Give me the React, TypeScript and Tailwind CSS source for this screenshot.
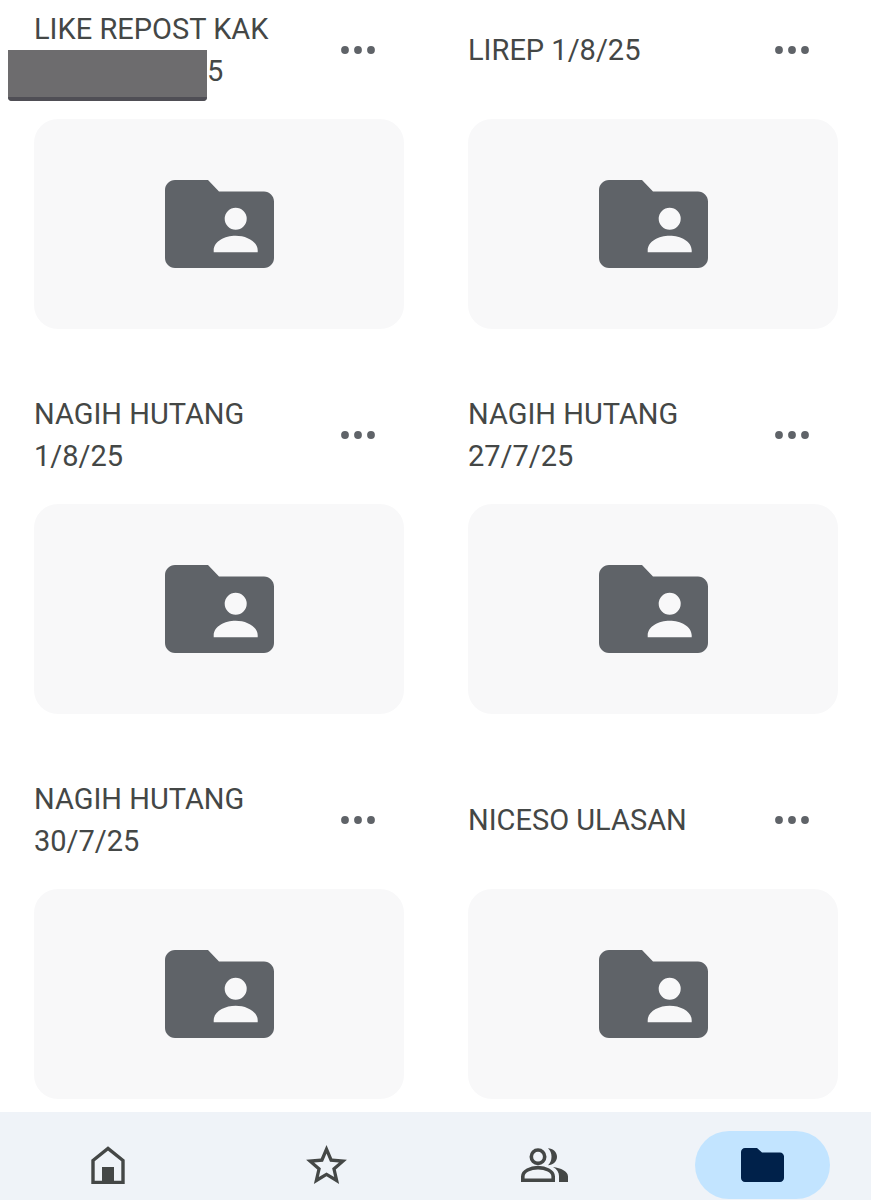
const folders = [
  { lines: ['LIKE REPOST KAK'], redacted: true },
  { lines: ['LIREP 1/8/25'] },
  { lines: ['NAGIH HUTANG 1/8/25'] },
  { lines: ['NAGIH HUTANG 27/7/25'] },
  { lines: ['NAGIH HUTANG 30/7/25'] },
  { lines: ['NICESO ULASAN'] },
];

function SharedFolderIcon() {
  return (
    <svg width="109" height="88" viewBox="0 0 109 88" className="text-[#5f6368]">
      <path
        fill="currentColor"
        fillRule="evenodd"
        d="M10 0H43L54 11.5H99C104.5 11.5 109 16 109 21.5V78C109 83.5 104.5 88 99 88H10C4.5 88 0 83.5 0 78V10C0 4.5 4.5 0 10 0ZM70.7 27.7A11 11 0 1 0 70.7 49.7A11 11 0 1 0 70.7 27.7ZM48.7 72.3H92.7V70.3C92.7 61.5 81.7 55.7 70.7 55.7S48.7 61.5 48.7 70.3Z"
      />
    </svg>
  );
}

function MoreDots() {
  return (
    <svg width="34" height="8" viewBox="0 0 34 8" className="text-[#5f6368]">
      <circle cx="4" cy="4" r="3.9" fill="currentColor" />
      <circle cx="17" cy="4" r="3.9" fill="currentColor" />
      <circle cx="30" cy="4" r="3.9" fill="currentColor" />
    </svg>
  );
}

function FolderCard({ lines, redacted }: { lines: string[]; redacted?: boolean }) {
  return (
    <div>
      <div className="relative flex h-[84px] items-center mb-[27px]">
        <div className="flex-1 min-w-0 pr-[20px] text-[29px] leading-[42px] text-[#444746]">
          {lines.map((l) => (
            <div key={l}>{l}</div>
          ))}
          {redacted && <div className="pl-[173px]">5</div>}
        </div>
        <button className="mr-[29px] flex h-[34px] w-[34px] items-center justify-center">
          <MoreDots />
        </button>
        {redacted && (
          <div className="absolute left-[-26px] top-[42px] flex h-[51px] w-[199px] flex-col justify-end overflow-hidden rounded-b-[4px] bg-[#6d6c6e]">
            <div className="h-[4px] bg-[#4f4e55]" />
          </div>
        )}
      </div>
      <div className="flex h-[210px] items-center justify-center rounded-[24px] bg-[#f8f8f9]">
        <SharedFolderIcon />
      </div>
    </div>
  );
}

function BottomNav() {
  return (
    <nav className="grid h-[88px] shrink-0 grid-cols-4 bg-[#eff3f8] pt-[19px]">
      <div className="flex h-[68px] items-center justify-center">
        <svg width="34" height="38" viewBox="0 0 34 38" className="text-[#444746] mr-[2px]">
          <path d="M2 36.5V14.5L17 2.5L32 14.5V36.5Z" fill="none" stroke="currentColor" strokeWidth="3.4" />
          <rect x="11" y="21" width="12" height="15" fill="currentColor" />
        </svg>
      </div>
      <div className="flex h-[68px] items-center justify-center">
        <svg width="49" height="49" viewBox="0 0 24 24" className="text-[#444746]">
          <path
            fill="currentColor"
            d="M22 9.24l-7.19-.62L12 2 9.19 8.63 2 9.24l5.46 4.73L5.82 21 12 17.27 18.18 21l-1.63-7.03L22 9.24zM12 15.4l-3.76 2.27 1-4.28-3.32-2.88 4.38-.38L12 6.1l1.71 4.04 4.38.38-3.32 2.88 1 4.28L12 15.4z"
          />
        </svg>
      </div>
      <div className="flex h-[68px] items-center justify-center">
        <svg width="47" height="34" viewBox="0 0 47 34" className="text-[#444746]">
          <circle cx="17" cy="8.7" r="6.7" fill="none" stroke="currentColor" strokeWidth="3.6" />
          <path
            fill="currentColor"
            d="M27 0.2C32 0.2 36 4 36 8.7S32 17.2 27 17.2C29.3 15 30.5 12 30.5 8.7S29.3 2.4 27 0.2Z"
          />
          <path
            fill="none"
            stroke="currentColor"
            strokeWidth="3.6"
            d="M1.8 32.2V28.5C1.8 23 9.5 19.6 17 19.6S32.2 23 32.2 28.5V32.2Z"
          />
          <path
            fill="currentColor"
            d="M32 19C40 20 47 23.2 47 28.5V34H38V28C38 24.5 36 21.2 32 19Z"
          />
        </svg>
      </div>
      <div className="flex h-[68px] items-center justify-center">
        <div className="flex h-[68px] w-[135px] items-center justify-center rounded-full bg-[#c2e4ff]">
          <svg width="43" height="34" viewBox="0 0 43 34" className="text-[#00214a]">
            <path
              fill="currentColor"
              d="M4 0H16L21 4.5H39C41.2 4.5 43 6.3 43 8.5V30C43 32.2 41.2 34 39 34H4C1.8 34 0 32.2 0 30V4C0 1.8 1.8 0 4 0Z"
            />
          </svg>
        </div>
      </div>
    </nav>
  );
}

export default function App() {
  return (
    <div
      className="flex h-[1200px] flex-col overflow-hidden bg-white"
      style={{ fontFamily: 'Roboto, "Noto Sans", sans-serif' }}
    >
      <main className="min-h-0 flex-1 overflow-hidden px-[34px] pt-[8px]">
        <div className="grid grid-cols-[370px_370px] gap-x-[64px] gap-y-[64px]">
          {folders.map((f) => (
            <FolderCard key={f.lines[0]} lines={f.lines} redacted={f.redacted} />
          ))}
        </div>
      </main>
      <BottomNav />
    </div>
  );
}
